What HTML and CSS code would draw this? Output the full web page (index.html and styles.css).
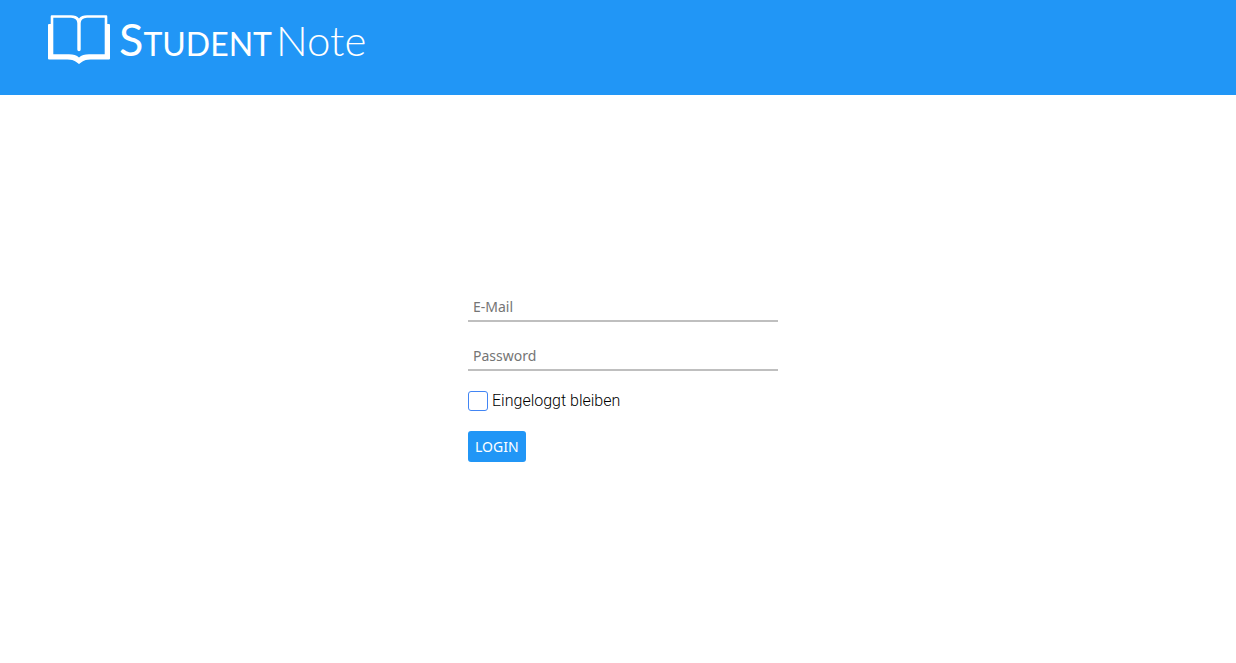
FILE: index.html
```html
<!DOCTYPE html>
<html lang="de">
<head>
<meta charset="utf-8">
<meta name="viewport" content="width=device-width, initial-scale=1">
<title>StudentNote</title>
<link rel="stylesheet" href="styles.css">
</head>
<body>
<header class="header">
  <a class="logo" href="#">
    <svg class="logo-icon" width="62" height="50" viewBox="0 0 62 50" aria-hidden="true">
      <path fill="#fff" fill-rule="evenodd" d="M2.700 1.500Q2.700 .3 3.700 .3H23Q28.500 .3 31 3.500Q33.500 .3 39 .3H58.300Q59.300 .3 59.300 1.500V9H61Q62 9 62 10V43.500Q62 44.500 61 44.500H42.500Q37 44.500 34.500 46.500L31 49L27.500 46.500Q25 44.500 19.500 44.500H1Q0 44.500 0 43.500V10Q0 9 1 9H2.700Z M5.300 2.700V39.200H21Q27.500 39.200 31 42.500Q34.500 39.200 41 39.200H56.700V2.700H39Q33 3 32.700 8V34.500Q32.700 36.200 31 36.200Q29.300 36.200 29.300 34.500V8Q29 3 23 2.700Z"/>
    </svg>
    <span class="logo-name"><span class="logo-student">Student</span><span class="logo-note">Note</span></span>
  </a>
</header>
<main class="main">
  <form class="login">
    <input class="field" type="email" placeholder="E-Mail" aria-label="E-Mail">
    <input class="field" type="password" placeholder="Password" aria-label="Password">
    <div class="remember">
      <input class="check" type="checkbox" id="remember">
      <label for="remember">Eingeloggt bleiben</label>
    </div>
    <button class="submit" type="submit">LOGIN</button>
  </form>
</main>
</body>
</html>
```
FILE: styles.css
```css
* {
  box-sizing: border-box;
}

body {
  margin: 0;
  min-height: 100vh;
  display: flex;
  flex-direction: column;
  background: #fff;
  color: #000;
  font: 300 16px/20px Roboto, sans-serif;
}

.header {
  display: flex;
  padding: 15px 48px 30px;
  background: #2196f6;
}

.logo {
  display: flex;
  align-items: flex-start;
  gap: 9px;
  color: #fff;
  text-decoration: none;
}

.logo-icon {
  display: block;
}

.logo-name {
  display: flex;
  gap: 4px;
  align-items: baseline;
  font-family: Lato, sans-serif;
  line-height: 48px;
}

.logo-student {
  font-size: 45px;
  font-weight: 400;
  font-variant: small-caps;
}

.logo-note {
  font-size: 42px;
  font-weight: 300;
}

.main {
  flex: 1;
  display: flex;
  align-items: center;
  justify-content: center;
  padding-bottom: 4px;
}

.login {
  width: 300px;
  display: flex;
  flex-direction: column;
  align-items: flex-start;
  gap: 20px;
}

.field {
  width: 310px;
  height: 29px;
  padding: 0 5px;
  border: 0;
  border-bottom: 2px solid #bfbfbf;
  outline: 0;
  background: transparent;
  font: 400 14px/20px "Noto Sans", sans-serif;
}

.field::placeholder {
  color: #757575;
}

.remember {
  display: flex;
  align-items: center;
  gap: 4px;
}

.check {
  appearance: none;
  width: 20px;
  height: 20px;
  margin: 0;
  border: 1px solid #4285f4;
  border-radius: 3px;
  background: #fff;
}

.check:checked {
  background: #2196f6;
}

.submit {
  padding: 6px 7px 5px;
  border: 0;
  border-radius: 3px;
  background: #2196f6;
  color: #fff;
  font: 400 14px/20px "Noto Sans", sans-serif;
}
```
